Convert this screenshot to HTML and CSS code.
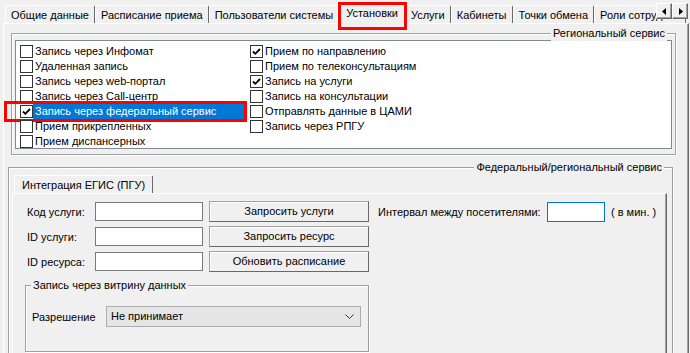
FILE: index.html
```html
<!DOCTYPE html>
<html lang="ru">
<head>
    <meta charset="UTF-8">
    <meta name="viewport" content="width=device-width, initial-scale=1.0">
    <title>Установки</title>
    <link rel="stylesheet" href="styles.css">
</head>
<body>
    <div class="window">
        <div class="tabstrip">
            <div class="tab">Общие данные</div>
            <div class="tab">Расписание приема</div>
            <div class="tab">Пользователи системы</div>
            <div class="tab active marked">Установки</div>
            <div class="tab">Услуги</div>
            <div class="tab">Кабинеты</div>
            <div class="tab">Точки обмена</div>
            <div class="tab cut">Роли сотрудников</div>
            <div class="scroller">
                <span class="scroll-btn"><svg width="5" height="7" viewBox="0 0 5 7"><path d="M4 0 L0 3.5 L4 7 Z" fill="#000"/></svg></span>
                <span class="scroll-btn"><svg width="5" height="7" viewBox="0 0 5 7"><path d="M1 0 L5 3.5 L1 7 Z" fill="#000"/></svg></span>
            </div>
        </div>

        <div class="page">
            <div class="group regional">
                <span class="group-title right">Региональный сервис</span>
                <div class="checklist">
                    <div class="item"><span class="box"></span><span class="text">Запись через Инфомат</span></div>
                    <div class="item"><span class="box"></span><span class="text">Удаленная запись</span></div>
                    <div class="item"><span class="box"></span><span class="text">Запись через web-портал</span></div>
                    <div class="item"><span class="box"></span><span class="text">Запись через Call-центр</span></div>
                    <div class="item selected marked"><span class="box checked"><svg width="11" height="11" viewBox="0 0 11 11"><path d="M2 5.5 L4.3 7.8 L9 3" fill="none" stroke="#000" stroke-width="1.8"/></svg></span><span class="text">Запись через федеральный сервис</span></div>
                    <div class="item"><span class="box"></span><span class="text">Прием прикрепленных</span></div>
                    <div class="item"><span class="box"></span><span class="text">Прием диспансерных</span></div>
                    <div class="item"><span class="box checked"><svg width="11" height="11" viewBox="0 0 11 11"><path d="M2 5.5 L4.3 7.8 L9 3" fill="none" stroke="#000" stroke-width="1.8"/></svg></span><span class="text">Прием по направлению</span></div>
                    <div class="item"><span class="box"></span><span class="text">Прием по телеконсультациям</span></div>
                    <div class="item"><span class="box checked"><svg width="11" height="11" viewBox="0 0 11 11"><path d="M2 5.5 L4.3 7.8 L9 3" fill="none" stroke="#000" stroke-width="1.8"/></svg></span><span class="text">Запись на услуги</span></div>
                    <div class="item"><span class="box"></span><span class="text">Запись на консультации</span></div>
                    <div class="item"><span class="box"></span><span class="text">Отправлять данные в ЦАМИ</span></div>
                    <div class="item"><span class="box"></span><span class="text">Запись через РПГУ</span></div>
                </div>
            </div>

            <div class="group federal">
                <span class="group-title right">Федеральный/региональный сервис</span>
                <div class="inner-tabs">
                    <div class="tab active">Интеграция ЕГИС (ПГУ)</div>
                </div>
                <div class="inner-page">
                    <div class="left-col">
                        <div class="form-row">
                            <span class="field-label">Код услуги:</span>
                            <span class="input"></span>
                            <span class="button">Запросить услуги</span>
                        </div>
                        <div class="form-row">
                            <span class="field-label">ID услуги:</span>
                            <span class="input"></span>
                            <span class="button">Запросить ресурс</span>
                        </div>
                        <div class="form-row">
                            <span class="field-label">ID ресурса:</span>
                            <span class="input"></span>
                            <span class="button">Обновить расписание</span>
                        </div>
                        <div class="group showcase">
                            <span class="group-title">Запись через витрину данных</span>
                            <div class="combo-row">
                                <span class="combo-label">Разрешение</span>
                                <span class="combo">Не принимает
                                    <svg class="chevron" width="9" height="5" viewBox="0 0 9 5"><path d="M0.5 0.5 L4.5 4.5 L8.5 0.5" fill="none" stroke="#333" stroke-width="1"/></svg>
                                </span>
                            </div>
                        </div>
                    </div>
                    <div class="right-col">
                        <span class="interval-label">Интервал между посетителями:</span>
                        <span class="input focused"></span>
                        <span class="unit">( в мин. )</span>
                    </div>
                </div>
            </div>
        </div>
    </div>
</body>
</html>
```

FILE: styles.css
```css
body {
    margin: 0;
    background-color: #f0f0f0;
    font-family: "Liberation Sans", Arial, sans-serif;
    font-size: 11px;
    color: #000;
    overflow: hidden;
}
.window {
    width: 690px;
    height: 353px;
    position: relative;
    overflow: hidden;
}

/* top tab strip */
.tabstrip {
    display: flex;
    align-items: flex-end;
    height: 24px;
    padding-left: 5px;
    position: relative;
    z-index: 1;
}
.tab {
    height: 17px;
    line-height: 18px;
    padding: 0 5px;
    margin-bottom: 1px;
    border: 1px solid #fff;
    border-right-color: #696969;
    border-bottom: none;
    border-radius: 2px 2px 0 0;
    white-space: nowrap;
    background-color: #f0f0f0;
    position: relative;
}
.tab.active {
    height: 21px;
    line-height: 20px;
    margin: 0 -2px;
    padding: 0 8px;
    z-index: 2;
}
.tab.cut {
    max-width: 80px;
    overflow: hidden;
}
.tab.marked::after {
    content: "";
    position: absolute;
    top: -1px;
    left: 0;
    right: -1px;
    bottom: -6px;
    border: 3px solid #f00;
}
.scroller {
    position: absolute;
    top: 3px;
    right: 2px;
    display: flex;
    z-index: 3;
}
.scroll-btn {
    width: 14px;
    height: 14px;
    display: flex;
    align-items: center;
    justify-content: center;
    background-color: #f0f0f0;
    border: 1px solid #fff;
    border-right-color: #696969;
    border-bottom-color: #696969;
    box-shadow: inset -1px -1px 0 #a0a0a0;
}

/* main page */
.page {
    margin: -1px 0 0 3px;
    width: 684px;
    height: 340px;
    border: 1px solid #fff;
    border-right-color: #696969;
    border-bottom-color: #696969;
    box-shadow: inset -1px 0 0 #a0a0a0;
}

.group {
    position: relative;
    border: 1px solid #a0a0a0;
    box-shadow: inset 1px 1px 0 #fff, 1px 1px 0 #fff;
}
.group-title {
    position: absolute;
    top: -8px;
    left: 6px;
    padding: 0 2px;
    line-height: 15px;
    background-color: #f0f0f0;
    white-space: nowrap;
}
.group-title.right {
    left: auto;
    right: 8px;
}

.regional {
    margin: 9px 0 0 7px;
    width: 663px;
    height: 120px;
}
.checklist {
    margin: 6px 0 0 3px;
    width: 647px;
    height: 104px;
    padding: 3px 4px 0 4px;
    background-color: #fff;
    border: 1px solid #828790;
    display: grid;
    grid-auto-flow: column;
    grid-template-rows: repeat(7, 15px);
    grid-template-columns: 230px 230px;
}
.item {
    display: flex;
    align-items: center;
    position: relative;
}
.box {
    width: 11px;
    height: 11px;
    border: 1px solid #333;
    background-color: #fff;
    flex: none;
    display: flex;
}
.item .text {
    flex: 1;
    margin-right: 6px;
    padding-left: 2px;
    line-height: 15px;
    white-space: nowrap;
}
.item.selected .text {
    background-color: #0078d7;
    color: #fff;
}
.item.marked::after {
    content: "";
    position: absolute;
    top: -3px;
    left: -16px;
    right: 3px;
    bottom: -3px;
    border: 3px solid #f00;
}

.federal {
    margin: 12px 0 0 4px;
    width: 663px;
    height: 200px;
}
.inner-tabs {
    display: flex;
    padding: 7px 0 0 5px;
}
.inner-tabs .tab {
    height: 17px;
    line-height: 18px;
    margin: 0;
    padding: 0 7px;
}
.inner-page {
    margin-left: 3px;
    width: 655px;
    height: 170px;
    border: 1px solid #fff;
    border-right-color: #696969;
    box-shadow: inset -1px 0 0 #a0a0a0;
    padding: 7px 0 0 14px;
    box-sizing: border-box;
    display: flex;
    gap: 9px;
}
.left-col {
    width: 342px;
    display: flex;
    flex-direction: column;
    gap: 4px;
}
.form-row {
    display: flex;
    align-items: center;
    height: 21px;
}
.field-label {
    width: 68px;
}
.input {
    width: 106px;
    height: 17px;
    background-color: #fff;
    border: 1px solid #7a7a7a;
    margin-right: 6px;
}
.button {
    width: 158px;
    height: 19px;
    line-height: 19px;
    text-align: center;
    background-color: #f0f0f0;
    border: 1px solid #a0a0a0;
    border-right-color: #696969;
    border-bottom-color: #696969;
    box-shadow: inset 1px 1px 0 #fff;
}
.showcase {
    margin: 9px 0 0 -2px;
    width: 342px;
    height: 65px;
}
.showcase .group-title {
    left: 5px;
}
.combo-row {
    display: flex;
    align-items: center;
    padding: 20px 0 0 6px;
}
.combo-label {
    width: 74px;
}
.combo {
    width: 249px;
    height: 19px;
    line-height: 19px;
    padding-left: 4px;
    background-color: #e5e5e5;
    border: 1px solid #adadad;
    display: flex;
    align-items: center;
    justify-content: space-between;
}
.chevron {
    margin-right: 6px;
}
.right-col {
    display: flex;
    align-items: center;
    height: 21px;
    white-space: nowrap;
}
.interval-label {
    width: 169px;
}
.input.focused {
    width: 56px;
    height: 18px;
    border-color: #0078d7;
    margin-right: 6px;
}
```
